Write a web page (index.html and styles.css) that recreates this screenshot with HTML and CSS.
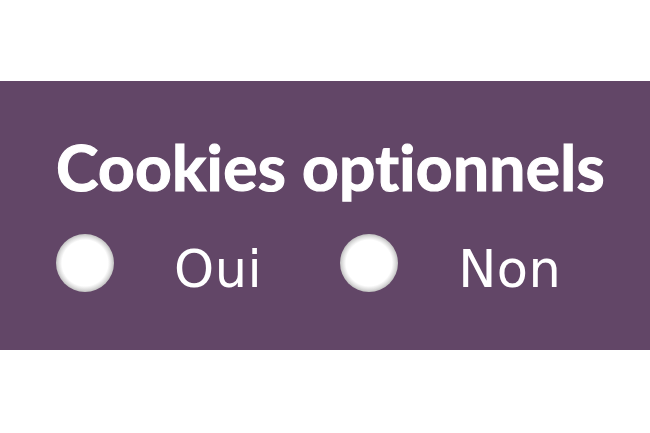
FILE: index.html
```html
<!DOCTYPE html>
<html lang="fr">
<head>
<meta charset="utf-8">
<title>Cookies optionnels</title>
<link rel="stylesheet" href="styles.css">
</head>
<body>
<section class="consent">
  <h2 class="consent-title">Cookies optionnels</h2>
  <div class="choices">
    <label class="choice"><span class="radio"></span><span class="choice-label">Oui</span></label>
    <label class="choice"><span class="radio"></span><span class="choice-label">Non</span></label>
  </div>
</section>
</body>
</html>
```

FILE: styles.css
```css
html, body {
  margin: 0;
  padding: 0;
  background: #ffffff;
}

body {
  padding-top: 81px;
}

.consent {
  background: #624667;
  height: 269px;
  box-sizing: border-box;
  padding: 54px 0 0 56px;
  color: #ffffff;
}

.consent-title {
  margin: 0;
  font-family: "Lato", "Liberation Sans", sans-serif;
  font-weight: 700;
  font-size: 64px;
  line-height: 64px;
  letter-spacing: 0.3px;
  font-variant-ligatures: none;
  -webkit-text-stroke: 1.2px #ffffff;
  color: #ffffff;
}

.choices {
  display: flex;
  align-items: flex-start;
  margin-top: 35px;
}

.choice {
  display: flex;
  align-items: flex-start;
  margin-right: 78px;
}

.radio {
  width: 58px;
  height: 58px;
  box-sizing: border-box;
  border-radius: 50%;
  background: radial-gradient(circle, #ffffff 0, #ffffff 56%, #e0e0e0 64%, #a8a8a8 76%, #bdbdbd 88%, rgba(98,70,103,0.5) 100%);
  margin-right: 60px;
  flex: none;
}

.choice-label {
  font-family: "DejaVu Sans", "Liberation Sans", sans-serif;
  font-size: 51px;
  line-height: 58px;
  margin-top: 7px;
  letter-spacing: 0.5px;
  color: #ffffff;
}
```
